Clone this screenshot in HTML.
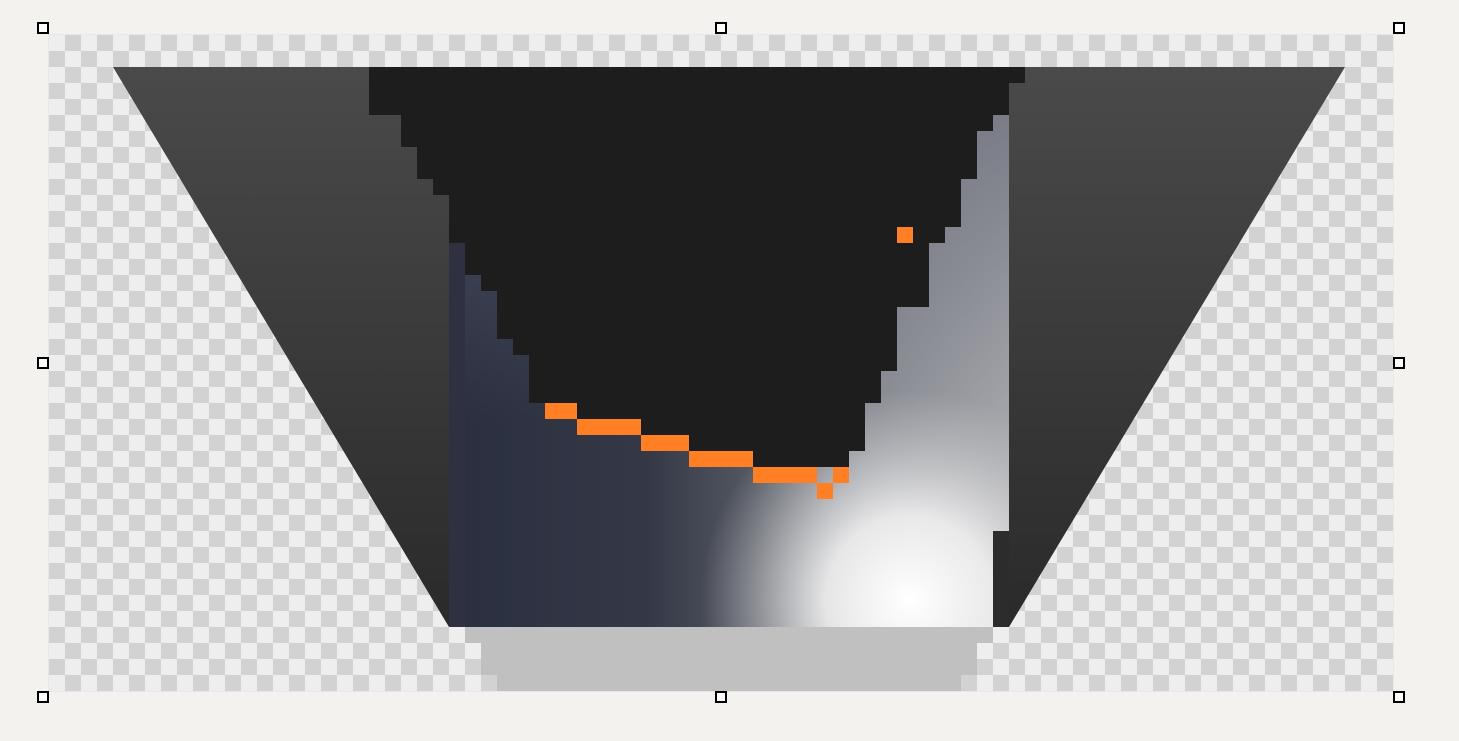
<!DOCTYPE html>
<html><head><meta charset="utf-8"><style>
html,body{margin:0;padding:0;background:#f3f2ee;width:1459px;height:741px;overflow:hidden}
svg{display:block}
</style></head><body>
<svg width="1459" height="741" viewBox="0 0 1459 741" xmlns="http://www.w3.org/2000/svg">
<defs>
<pattern id="chk" x="49" y="35" width="32" height="32" patternUnits="userSpaceOnUse">
<rect width="32" height="32" fill="#eeeeee"/>
<rect x="16" width="16" height="16" fill="#d2d2d2"/>
<rect y="16" width="16" height="16" fill="#d2d2d2"/>
</pattern>
<linearGradient id="side" x1="0" y1="67" x2="0" y2="627" gradientUnits="userSpaceOnUse">
<stop offset="0" stop-color="#4a4a4a"/><stop offset="1" stop-color="#2a2a2a"/>
</linearGradient>
<linearGradient id="cup" x1="449" y1="0" x2="1009" y2="0" gradientUnits="userSpaceOnUse">
<stop offset="0" stop-color="#2a2f40"/><stop offset="0.35" stop-color="#343846"/>
<stop offset="0.55" stop-color="#555963"/><stop offset="0.75" stop-color="#8a8c94"/>
<stop offset="1" stop-color="#a4a5aa"/>
</linearGradient>
<radialGradient id="hl" cx="910" cy="600" r="210" gradientUnits="userSpaceOnUse">
<stop offset="0" stop-color="#ffffff" stop-opacity="1"/>
<stop offset="0.4" stop-color="#f2f2f2" stop-opacity="0.9"/>
<stop offset="1" stop-color="#d0d0d0" stop-opacity="0"/>
</radialGradient>
<linearGradient id="topdark" x1="0" y1="115" x2="0" y2="420" gradientUnits="userSpaceOnUse">
<stop offset="0" stop-color="#5e6270" stop-opacity="0.6"/><stop offset="1" stop-color="#5e6270" stop-opacity="0"/>
</linearGradient>
</defs>
<rect x="48" y="34" width="1346" height="658" fill="#e8e8e6"/>
<rect x="49" y="35" width="1344" height="656" fill="url(#chk)"/>
<polygon points="113,67 1345,67 1009,627 449,627" fill="url(#side)"/>
<rect x="449" y="115" width="560" height="512" fill="url(#cup)"/>
<rect x="449" y="115" width="560" height="512" fill="url(#topdark)"/>
<rect x="449" y="115" width="560" height="512" fill="url(#hl)"/>
<rect x="449" y="243" width="16" height="384" fill="#2f3140"/>
<rect x="993" y="531" width="16" height="96" fill="#2c2c2c"/>
<polygon fill="#1d1d1d" points="369,67 1025,67 1025,83 1009,83 1009,115 993,115 993,131 977,131 977,179 961,179 961,227 945,227 945,243 929,243 929,307 897,307 897,371 881,371 881,403 865,403 865,451 849,451 849,467 817,467 817,483 753,483 753,467 689,467 689,451 641,451 641,435 577,435 577,419 545,419 545,403 529,403 529,355 513,355 513,339 497,339 497,291 481,291 481,275 465,275 465,243 449,243 449,195 433,195 433,179 417,179 417,147 401,147 401,115 369,115"/>
<g fill="#fe7f24">
<rect x="545" y="403" width="32" height="16"/>
<rect x="577" y="419" width="64" height="16"/>
<rect x="641" y="435" width="48" height="16"/>
<rect x="689" y="451" width="64" height="16"/>
<rect x="753" y="467" width="64" height="16"/>
<rect x="833" y="467" width="16" height="16"/>
<rect x="817" y="483" width="16" height="16"/>
<rect x="897" y="227" width="16" height="16"/>
</g>
<g fill="#c0c0c0">
<rect x="465" y="627" width="528" height="16"/>
<rect x="481" y="643" width="496" height="32"/>
<rect x="497" y="675" width="464" height="16"/>
</g>
<g fill="#fff" stroke="#000" stroke-width="2">
<rect x="38" y="23" width="10" height="10"/><rect x="716" y="23" width="10" height="10"/><rect x="1394" y="23" width="10" height="10"/>
<rect x="38" y="358" width="10" height="10"/><rect x="1394" y="358" width="10" height="10"/>
<rect x="38" y="692" width="10" height="10"/><rect x="716" y="692" width="10" height="10"/><rect x="1394" y="692" width="10" height="10"/>
</g>
</svg>
</body></html>
